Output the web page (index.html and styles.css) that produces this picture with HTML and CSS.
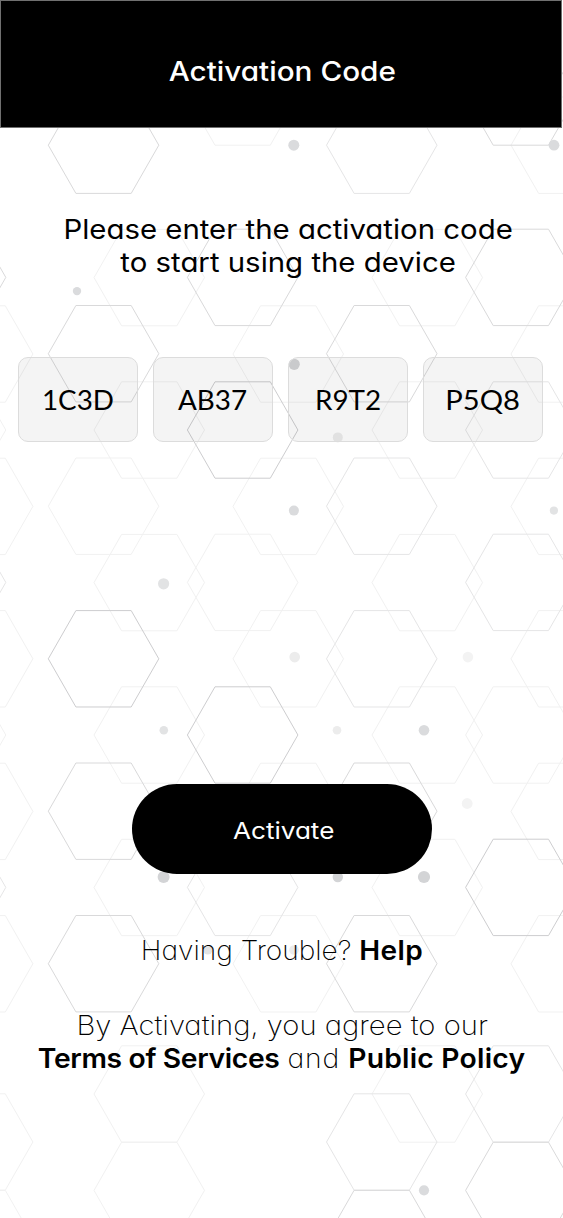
FILE: index.html
```
<!DOCTYPE html>
<html lang="en">
<head>
<meta charset="utf-8">
<title>Activation Code</title>
<link rel="stylesheet" href="styles.css">
</head>
<body>
<div class="screen">
<svg class="pattern" viewBox="0 0 563 1218" aria-hidden="true">
<defs><path id="hex" d="M-55.2 0L-27.6-48.2H27.7L55.3 0L27.7 48.2H-27.6Z"/></defs>
<g class="faint">
<use href="#hex" x="149.2" y="277.6"/><use href="#hex" x="149.2" y="430"/><use href="#hex" x="149.2" y="582.6"/><use href="#hex" x="149.2" y="735"/><use href="#hex" x="149.2" y="887.5"/><use href="#hex" x="149.2" y="1094"/><use href="#hex" x="149.2" y="1190.4"/>
<use href="#hex" x="427.2" y="277.6"/><use href="#hex" x="427.2" y="430"/><use href="#hex" x="427.2" y="582.6"/><use href="#hex" x="427.2" y="735"/><use href="#hex" x="427.2" y="887.5"/><use href="#hex" x="427.2" y="1094"/>
<use href="#hex" x="-22.4" y="354"/><use href="#hex" x="-22.4" y="506.4"/><use href="#hex" x="-22.4" y="658.8"/><use href="#hex" x="-22.4" y="811.4"/><use href="#hex" x="-22.4" y="963.8"/><use href="#hex" x="-22.4" y="1142"/><use href="#hex" x="-22.4" y="1238.5"/>
<use href="#hex" x="288.2" y="354"/><use href="#hex" x="288.2" y="506.4"/><use href="#hex" x="288.2" y="658.8"/><use href="#hex" x="288.2" y="811.4"/><use href="#hex" x="288.2" y="963.8"/>
<use href="#hex" x="566.2" y="145.2"/><use href="#hex" x="566.2" y="354"/><use href="#hex" x="566.2" y="506.4"/><use href="#hex" x="566.2" y="658.8"/><use href="#hex" x="566.2" y="811.4"/><use href="#hex" x="566.2" y="963.8"/>
<use href="#hex" x="103.5" y="506.2"/><use href="#hex" x="242.6" y="582.4"/><use href="#hex" x="520.8" y="735"/><use href="#hex" x="-49.5" y="430"/><use href="#hex" x="-49.5" y="735"/><use href="#hex" x="242.6" y="97"/>
</g>
<g class="soft">
<use href="#hex" x="381.7" y="145.2"/><use href="#hex" x="381.7" y="506.2"/><use href="#hex" x="381.7" y="658.8"/><use href="#hex" x="520.8" y="430"/><use href="#hex" x="520.8" y="582.4"/><use href="#hex" x="-49.5" y="582.4"/><use href="#hex" x="-49.5" y="887.4"/><use href="#hex" x="381.7" y="1142"/><use href="#hex" x="520.8" y="1094"/><use href="#hex" x="242.6" y="887.4"/>
</g>
<g class="mid">
<use href="#hex" x="103.5" y="145.2"/><use href="#hex" x="103.5" y="353.7"/><use href="#hex" x="103.5" y="811.2"/><use href="#hex" x="103.5" y="963.7"/><use href="#hex" x="242.6" y="277.4"/><use href="#hex" x="-49.5" y="277.4"/><use href="#hex" x="381.7" y="353.7"/><use href="#hex" x="381.7" y="811.2"/><use href="#hex" x="381.7" y="963.7"/><use href="#hex" x="381.7" y="1238.5"/><use href="#hex" x="520.8" y="97"/><use href="#hex" x="520.8" y="277.4"/><use href="#hex" x="520.8" y="1190.4"/>
</g>
<g class="strong">
<use href="#hex" x="103.5" y="658.8"/><use href="#hex" x="242.6" y="430"/><use href="#hex" x="242.6" y="735"/><use href="#hex" x="520.8" y="887.4"/>
</g>
<g fill="#dadbdd"><circle cx="293.8" cy="145.2" r="5.5"/><circle cx="554" cy="145.2" r="5.4"/><circle cx="77" cy="291.1" r="4.2"/><circle cx="293.9" cy="510.6" r="5"/><circle cx="424" cy="730.2" r="5.3"/><circle cx="424" cy="1190.3" r="5.1"/></g>
<g fill="#d3d4d6"><circle cx="294.2" cy="364.3" r="5.6"/><circle cx="163.6" cy="877.1" r="6"/><circle cx="337.8" cy="877" r="5.2"/><circle cx="424" cy="877" r="6.1"/></g>
<g fill="#e2e3e4"><circle cx="553.9" cy="510.6" r="4.1"/><circle cx="163.6" cy="583.8" r="5.6"/><circle cx="163.8" cy="730.3" r="4.3"/><circle cx="207.8" cy="950" r="4.6"/></g>
<g fill="#ececec"><circle cx="337.8" cy="437.4" r="5"/><circle cx="294.7" cy="657.1" r="5.3"/><circle cx="337" cy="730.2" r="4.3"/><circle cx="294" cy="950" r="4.8"/></g>
<g fill="#f3f3f3"><circle cx="467.9" cy="657.1" r="5.3"/><circle cx="467.2" cy="803.5" r="5.4"/></g>
</svg>
<header class="header"><h1 class="title">Activation Code</h1></header>
<main class="content">
<p class="prompt">Please enter the activation code<br>to start using the device</p>
<div class="codes"><div class="code"><span class="code-text">1C3D</span></div><div class="code"><span class="code-text">AB37</span></div><div class="code"><span class="code-text">R9T2</span></div><div class="code"><span class="code-text code-text-wide">P5Q8</span></div></div>
<button class="activate"><span class="activate-label">Activate</span></button>
<p class="trouble">Having Trouble? <b class="help">Help</b></p>
<p class="agree">By Activating, you agree to our</p>
<p class="legal"><b class="terms">Terms of Services</b> <span class="and">and</span> <b class="policy">Public Policy</b></p>
</main>
</div>
</body>
</html>
```
FILE: styles.css
```
* { box-sizing: border-box; }
body { margin: 0; background: #fff; color: #000; font-family: Inter, "Open Sans", sans-serif; font-feature-settings: "cv11"; }
.screen { position: relative; width: 563px; height: 1218px; overflow: hidden; }
.pattern { position: absolute; inset: 0; width: 563px; height: 1218px; fill: none; }
.faint { stroke: #f1f1f1; }
.soft { stroke: #e5e5e6; }
.mid { stroke: #d9d9da; }
.strong { stroke: #cdcdcf; }
.header { position: relative; width: 562.4px; height: 127.5px; background: #000; border: 1.5px solid #707070; display: flex; justify-content: center; padding: 54px 0 0 3px; }
.title { margin: 0; font-size: 27px; line-height: 33px; font-weight: 500; color: #fff; white-space: nowrap; transform: scaleX(1.1); }
.content { position: relative; display: flex; flex-direction: column; align-items: center; white-space: nowrap; font-size: 27px; line-height: 33px; }
.prompt { margin: 85px 0 0; padding-left: 13px; text-align: center; transform: scaleX(1.088); }
.codes { display: flex; gap: 15px; margin-top: 78px; padding-right: 2px; }
.code { width: 120px; height: 85px; border: 1.4px solid #dcdcdc; border-radius: 10px; background: rgba(0,0,0,.042); display: flex; align-items: center; justify-content: center; padding-top: 1px; font-family: Lato, Inter, sans-serif; font-size: 27px; }
.code-text { transform: scaleX(1.03); }
.code-text-wide { transform: scaleX(1.08); }
.activate { width: 300px; height: 90px; margin: 342.5px 0 0; padding: 3px 0 0 4px; border: 0; border-radius: 45px; background: #000; color: #fff; font: 400 23.5px/33px Inter, sans-serif; font-feature-settings: "cv11"; }
.activate-label { display: inline-block; transform: scaleX(1.11); }
.trouble { margin: 59.5px 0 0; padding-left: 2px; font-weight: 200; transform: scaleX(1.038); }
.agree { margin: 42px 0 0; padding-left: 2px; font-weight: 200; transform: scaleX(1.082); }
.legal { margin: 0; padding-left: 1px; font-weight: 200; transform: scaleX(1.048); }
b { font-weight: 600; }
.help { letter-spacing: .4px; }
.terms { letter-spacing: -.35px; }
.and { letter-spacing: .9px; }
.policy { letter-spacing: .2px; }
```
